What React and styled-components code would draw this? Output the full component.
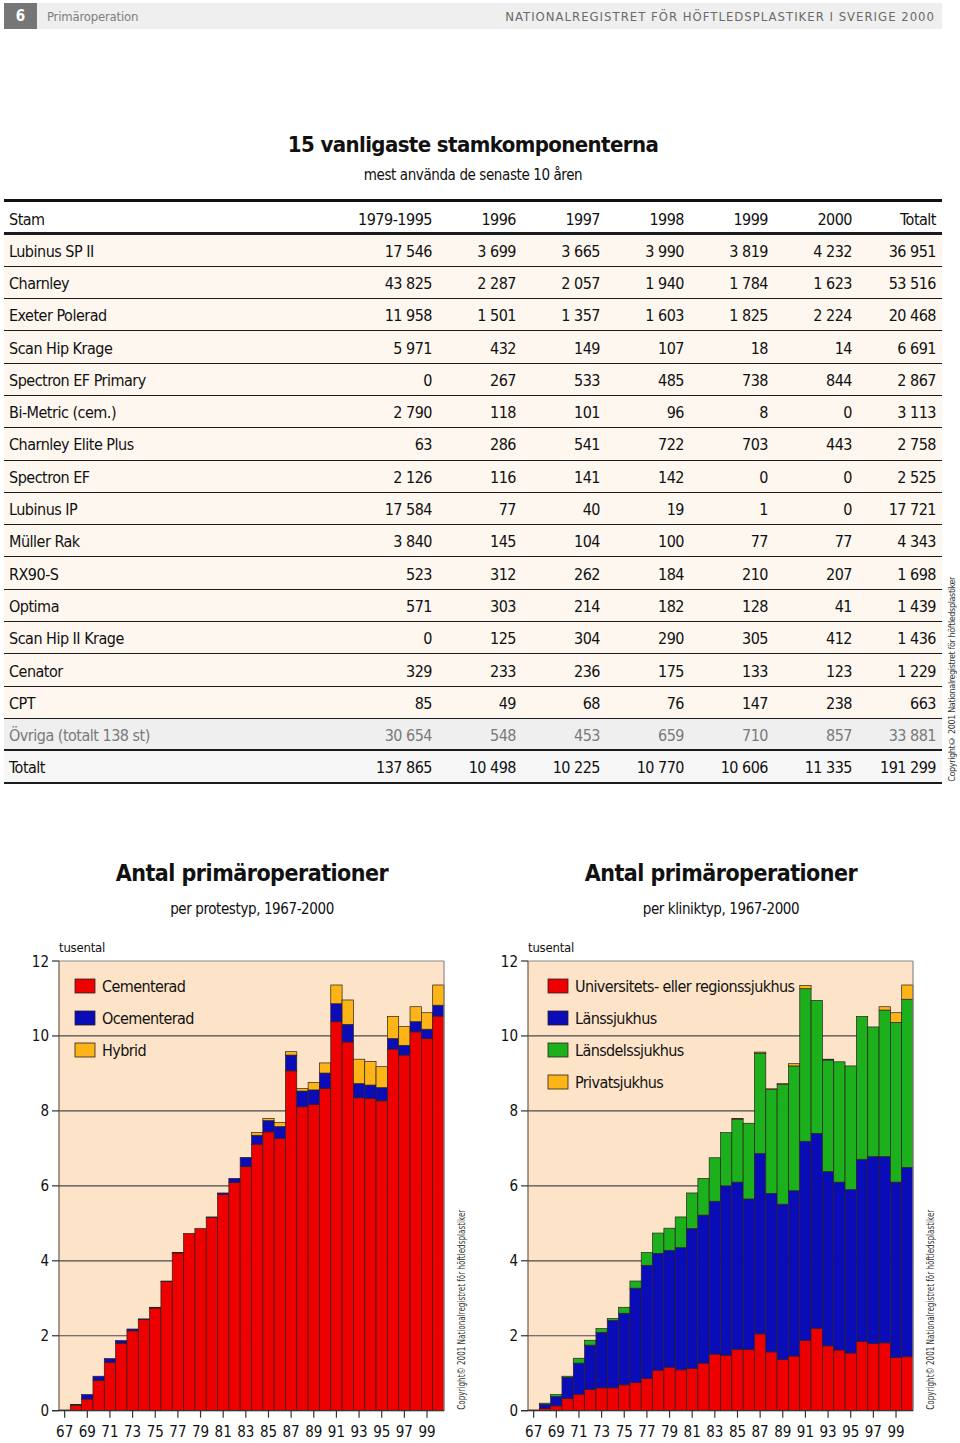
import styled, { createGlobalStyle } from "styled-components"

const FONT = `"Liberation Sans Narrow", "DejaVu Sans Condensed", "Liberation Sans", sans-serif`

const GlobalStyle = createGlobalStyle`
  body {
    margin: 0;
    background: #fff;
    font-family: ${FONT};
    color: #111;
  }
`

const Page = styled.div`
  width: 960px;
  height: 1443px;
  padding: 3px 0 0 4px;
  box-sizing: border-box;
  overflow: hidden;
`

const HeaderBar = styled.header`
  display: flex;
  align-items: center;
  width: 938px;
  height: 26px;
  background: #efefef;
`

const PageNo = styled.div`
  width: 33px;
  height: 100%;
  background: #767676;
  color: #fff;
  font-weight: bold;
  font-size: 15px;
  display: flex;
  align-items: center;
  justify-content: center;
`

const SectionName = styled.span`
  margin-left: 10px;
  color: #7e7e7e;
  font-size: 13px;
  letter-spacing: -0.2px;
`

const RunningTitle = styled.span`
  margin-left: auto;
  margin-right: 7px;
  color: #6a6a6a;
  font-size: 13px;
  letter-spacing: 1px;
`

const TitleBlock = styled.div`
  width: 938px;
  margin-top: 100px;
  text-align: center;
`

const MainTitle = styled.h1`
  margin: 0;
  font-size: 22px;
  line-height: 32px;
  letter-spacing: -0.6px;
  font-weight: bold;
`

const SubTitle = styled.div`
  margin-top: 3px;
  font-size: 15px;
  line-height: 22px;
  letter-spacing: -0.4px;
`

const TableWrap = styled.div`
  display: flex;
  align-items: flex-end;
  margin-top: 13px;
`

const Table = styled.div`
  width: 938px;
  border-top: 3px solid #111;
`

const Row = styled.div`
  display: grid;
  grid-template-columns: 1fr repeat(7, 84px);
  align-items: center;
  box-sizing: border-box;
  height: ${p => (p.$head ? "32.5px" : "32.3px")};
  padding-top: ${p => (p.$head ? "5px" : "2px")};
  border-bottom: ${p => p.$line}px solid #1c1c1c;
  background: ${p => p.$bg};
  color: ${p => p.$color || "#111"};
  font-size: 16px;
  letter-spacing: -0.5px;
`

const Label = styled.div`
  padding-left: 5px;
  white-space: nowrap;
`

const Num = styled.div`
  text-align: right;
  padding-right: 6px;
  white-space: nowrap;
`

const SideNote = styled.div`
  writing-mode: vertical-rl;
  transform: rotate(180deg);
  margin-left: 5px;
  margin-bottom: 2px;
  font-size: 9px;
  letter-spacing: -0.4px;
  color: #333;
  white-space: nowrap;
`

const ChartsRow = styled.div`
  display: flex;
  margin-top: 72px;
`

const ChartPanel = styled.section`
  width: 469px;
  display: flex;
  flex-direction: column;
`

const ChartHeading = styled.div`
  margin-left: 55px;
  width: 386px;
  text-align: center;
`

const ChartTitle = styled.h2`
  margin: 0;
  font-size: 23px;
  line-height: 34px;
  letter-spacing: -0.5px;
  font-weight: bold;
`

const ChartSub = styled.div`
  margin-top: 8px;
  font-size: 15px;
  line-height: 22px;
  letter-spacing: -0.4px;
`

const ChartSvg = styled.svg`
  display: block;
  margin-top: 14px;
  font-family: ${FONT};
`

const headers = ["Stam", "1979-1995", "1996", "1997", "1998", "1999", "2000", "Totalt"]

const rows = [
  ["Lubinus SP II", "17 546", "3 699", "3 665", "3 990", "3 819", "4 232", "36 951"],
  ["Charnley", "43 825", "2 287", "2 057", "1 940", "1 784", "1 623", "53 516"],
  ["Exeter Polerad", "11 958", "1 501", "1 357", "1 603", "1 825", "2 224", "20 468"],
  ["Scan Hip Krage", "5 971", "432", "149", "107", "18", "14", "6 691"],
  ["Spectron EF Primary", "0", "267", "533", "485", "738", "844", "2 867"],
  ["Bi-Metric (cem.)", "2 790", "118", "101", "96", "8", "0", "3 113"],
  ["Charnley Elite Plus", "63", "286", "541", "722", "703", "443", "2 758"],
  ["Spectron EF", "2 126", "116", "141", "142", "0", "0", "2 525"],
  ["Lubinus IP", "17 584", "77", "40", "19", "1", "0", "17 721"],
  ["Müller Rak", "3 840", "145", "104", "100", "77", "77", "4 343"],
  ["RX90-S", "523", "312", "262", "184", "210", "207", "1 698"],
  ["Optima", "571", "303", "214", "182", "128", "41", "1 439"],
  ["Scan Hip II Krage", "0", "125", "304", "290", "305", "412", "1 436"],
  ["Cenator", "329", "233", "236", "175", "133", "123", "1 229"],
  ["CPT", "85", "49", "68", "76", "147", "238", "663"],
]

const other = ["Övriga (totalt 138 st)", "30 654", "548", "453", "659", "710", "857", "33 881"]
const total = ["Totalt", "137 865", "10 498", "10 225", "10 770", "10 606", "11 335", "191 299"]

const COPY = "Copyright© 2001 Nationalregistret för höftledsplastiker"

// segments per year 1967-2000, in thousands, bottom to top
const byProsthesis = [
  [0.02, 0, 0], [0.15, 0.02, 0], [0.31, 0.12, 0], [0.81, 0.11, 0], [1.29, 0.1, 0],
  [1.8, 0.07, 0], [2.13, 0.05, 0], [2.43, 0.02, 0], [2.74, 0.02, 0], [3.45, 0.01, 0],
  [4.21, 0.01, 0], [4.73, 0, 0], [4.86, 0, 0], [5.16, 0.01, 0], [5.77, 0.04, 0],
  [6.09, 0.11, 0], [6.52, 0.24, 0], [7.11, 0.24, 0.07], [7.44, 0.3, 0.06], [7.27, 0.31, 0.11],
  [9.07, 0.42, 0.09], [8.11, 0.42, 0.07], [8.17, 0.39, 0.2], [8.6, 0.41, 0.27], [10.38, 0.48, 0.5],
  [9.84, 0.47, 0.65], [8.35, 0.38, 0.65], [8.33, 0.36, 0.63], [8.27, 0.35, 0.56], [9.65, 0.28, 0.59],
  [9.49, 0.26, 0.5], [10.11, 0.27, 0.4], [9.93, 0.25, 0.44], [10.53, 0.29, 0.54],
]

// cumulative tops: univ, läns, länsdels, total
const byClinicCum = [
  [0.01, 0.02, 0.02, 0.02], [0.06, 0.17, 0.2, 0.2], [0.13, 0.38, 0.43, 0.43], [0.33, 0.89, 0.92, 0.92],
  [0.44, 1.27, 1.4, 1.4], [0.57, 1.75, 1.88, 1.88], [0.61, 2.09, 2.19, 2.19], [0.61, 2.41, 2.46, 2.46],
  [0.69, 2.6, 2.76, 2.76], [0.75, 3.27, 3.46, 3.46], [0.86, 3.88, 4.22, 4.22], [1.08, 4.2, 4.74, 4.74],
  [1.16, 4.28, 4.87, 4.87], [1.09, 4.35, 5.17, 5.17], [1.13, 4.86, 5.81, 5.81], [1.27, 5.22, 6.2, 6.2],
  [1.51, 5.59, 6.75, 6.75], [1.48, 6.0, 7.42, 7.42], [1.64, 6.1, 7.78, 7.8], [1.63, 5.65, 7.67, 7.67],
  [2.05, 6.86, 9.54, 9.57], [1.57, 5.8, 8.57, 8.59], [1.37, 5.51, 8.7, 8.73], [1.46, 5.87, 9.2, 9.26],
  [1.88, 7.19, 11.26, 11.35], [2.2, 7.4, 10.95, 10.95], [1.73, 6.38, 9.36, 9.38], [1.62, 6.1, 9.31, 9.31],
  [1.54, 5.9, 9.2, 9.2], [1.85, 6.71, 10.52, 10.52], [1.79, 6.78, 10.24, 10.24], [1.81, 6.78, 10.69, 10.78],
  [1.42, 6.1, 10.36, 10.62], [1.44, 6.49, 10.98, 11.36],
]
const byClinic = byClinicCum.map(c => [c[0], c[1] - c[0], c[2] - c[1], c[3] - c[2]])

const RED = "#ee0000"
const BLUE = "#0a0cb8"
const GREEN = "#1cb01c"
const ORANGE = "#fdb416"

const W = 385
const X0 = 55
const YTOP = 27
const Y0 = 476.7
const SCALE = (Y0 - YTOP) / 12
const yOf = v => Y0 - v * SCALE

function BarChart({ data, colors, legend, legendX }) {
  const bw = W / data.length
  return (
    <ChartSvg width="469" height="508" viewBox="0 0 469 508">
      <rect x={X0} y={YTOP} width={W} height={Y0 - YTOP} fill="#fde4c9" />
      {[2, 4, 6, 8, 10].map(v => (
        <line key={v} x1={X0} x2={X0 + W} y1={yOf(v)} y2={yOf(v)} stroke="#4a4a4a" strokeWidth="1.2" />
      ))}
      {data.map((segs, i) => {
        let acc = 0
        return segs.map((s, k) => {
          if (s <= 0) return null
          const y1 = yOf(acc + s)
          const y2 = yOf(acc)
          acc += s
          return (
            <rect
              key={i + "-" + k}
              x={X0 + i * bw}
              y={y1}
              width={bw}
              height={y2 - y1}
              fill={colors[k]}
              stroke="#2b2020"
              strokeWidth="0.7"
            />
          )
        })
      })}
      <line x1={X0} x2={X0 + W} y1={YTOP} y2={YTOP} stroke="#8a8a8a" strokeWidth="1.2" />
      <line x1={X0 + W} x2={X0 + W} y1={YTOP} y2={Y0} stroke="#8a8a8a" strokeWidth="1.2" />
      <line x1={X0} x2={X0} y1={YTOP} y2={Y0} stroke="#6a5a4a" strokeWidth="1.2" />
      <line x1={X0 - 7} x2={X0 + W} y1={Y0} y2={Y0} stroke="#333" strokeWidth="1.2" />
      {[0, 2, 4, 6, 8, 10, 12].map(v => (
        <g key={v}>
          <line x1={X0 - 7} x2={X0} y1={yOf(v)} y2={yOf(v)} stroke="#333" strokeWidth="1.2" />
          <text x={X0 - 10} y={yOf(v) + 5.5} fontSize="15" textAnchor="end" fill="#111">
            {v}
          </text>
        </g>
      ))}
      {data.map((_, i) =>
        i % 2 === 0 ? (
          <g key={i}>
            <line
              x1={X0 + (i + 0.5) * bw}
              x2={X0 + (i + 0.5) * bw}
              y1={Y0}
              y2={Y0 + 7}
              stroke="#333"
              strokeWidth="1.2"
            />
            <text x={X0 + (i + 0.5) * bw} y={Y0 + 26} fontSize="15" textAnchor="middle" fill="#111">
              {67 + i}
            </text>
          </g>
        ) : null
      )}
      <text x={X0} y={18} fontSize="13" letterSpacing="-0.2" fill="#111">
        tusental
      </text>
      {legend.map((name, k) => (
        <g key={name}>
          <rect x={legendX} y={45 + k * 32} width="20" height="14" fill={colors[k]} stroke="#2b2020" strokeWidth="0.8" />
          <text x={legendX + 27} y={58 + k * 32} fontSize="16" letterSpacing="-0.6" fill="#111">
            {name}
          </text>
        </g>
      ))}
      <text
        transform={`translate(${X0 + W + 21}, ${Y0 - 1}) rotate(-90)`}
        fontSize="10"
        fill="#333"
        textLength="200"
        lengthAdjust="spacingAndGlyphs"
      >
        {COPY}
      </text>
    </ChartSvg>
  )
}

const App = () => {
  return (
    <Page>
      <GlobalStyle />
      <HeaderBar>
        <PageNo>6</PageNo>
        <SectionName>Primäroperation</SectionName>
        <RunningTitle>NATIONALREGISTRET FÖR HÖFTLEDSPLASTIKER I SVERIGE 2000</RunningTitle>
      </HeaderBar>

      <TitleBlock>
        <MainTitle>15 vanligaste stamkomponenterna</MainTitle>
        <SubTitle>mest använda de senaste 10 åren</SubTitle>
      </TitleBlock>

      <TableWrap>
        <Table>
          <Row $head $line={3} $bg="#fff">
            <Label>{headers[0]}</Label>
            {headers.slice(1).map(h => (
              <Num key={h}>{h}</Num>
            ))}
          </Row>
          {rows.map(r => (
            <Row key={r[0]} $line={1} $bg="#fdf7f0">
              <Label>{r[0]}</Label>
              {r.slice(1).map((v, i) => (
                <Num key={i}>{v}</Num>
              ))}
            </Row>
          ))}
          <Row $line={2} $bg="#efefef" $color="#7a7a7a">
            <Label>{other[0]}</Label>
            {other.slice(1).map((v, i) => (
              <Num key={i}>{v}</Num>
            ))}
          </Row>
          <Row $line={2} $bg="#f7f7f7">
            <Label>{total[0]}</Label>
            {total.slice(1).map((v, i) => (
              <Num key={i}>{v}</Num>
            ))}
          </Row>
        </Table>
        <SideNote>{COPY}</SideNote>
      </TableWrap>

      <ChartsRow>
        <ChartPanel>
          <ChartHeading>
            <ChartTitle>Antal primäroperationer</ChartTitle>
            <ChartSub>per protestyp, 1967-2000</ChartSub>
          </ChartHeading>
          <BarChart
            data={byProsthesis}
            colors={[RED, BLUE, ORANGE]}
            legend={["Cementerad", "Ocementerad", "Hybrid"]}
            legendX={71}
          />
        </ChartPanel>
        <ChartPanel>
          <ChartHeading>
            <ChartTitle>Antal primäroperationer</ChartTitle>
            <ChartSub>per kliniktyp, 1967-2000</ChartSub>
          </ChartHeading>
          <BarChart
            data={byClinic}
            colors={[RED, BLUE, GREEN, ORANGE]}
            legend={["Universitets- eller regionssjukhus", "Länssjukhus", "Länsdelssjukhus", "Privatsjukhus"]}
            legendX={75}
          />
        </ChartPanel>
      </ChartsRow>
    </Page>
  )
}

export default App
